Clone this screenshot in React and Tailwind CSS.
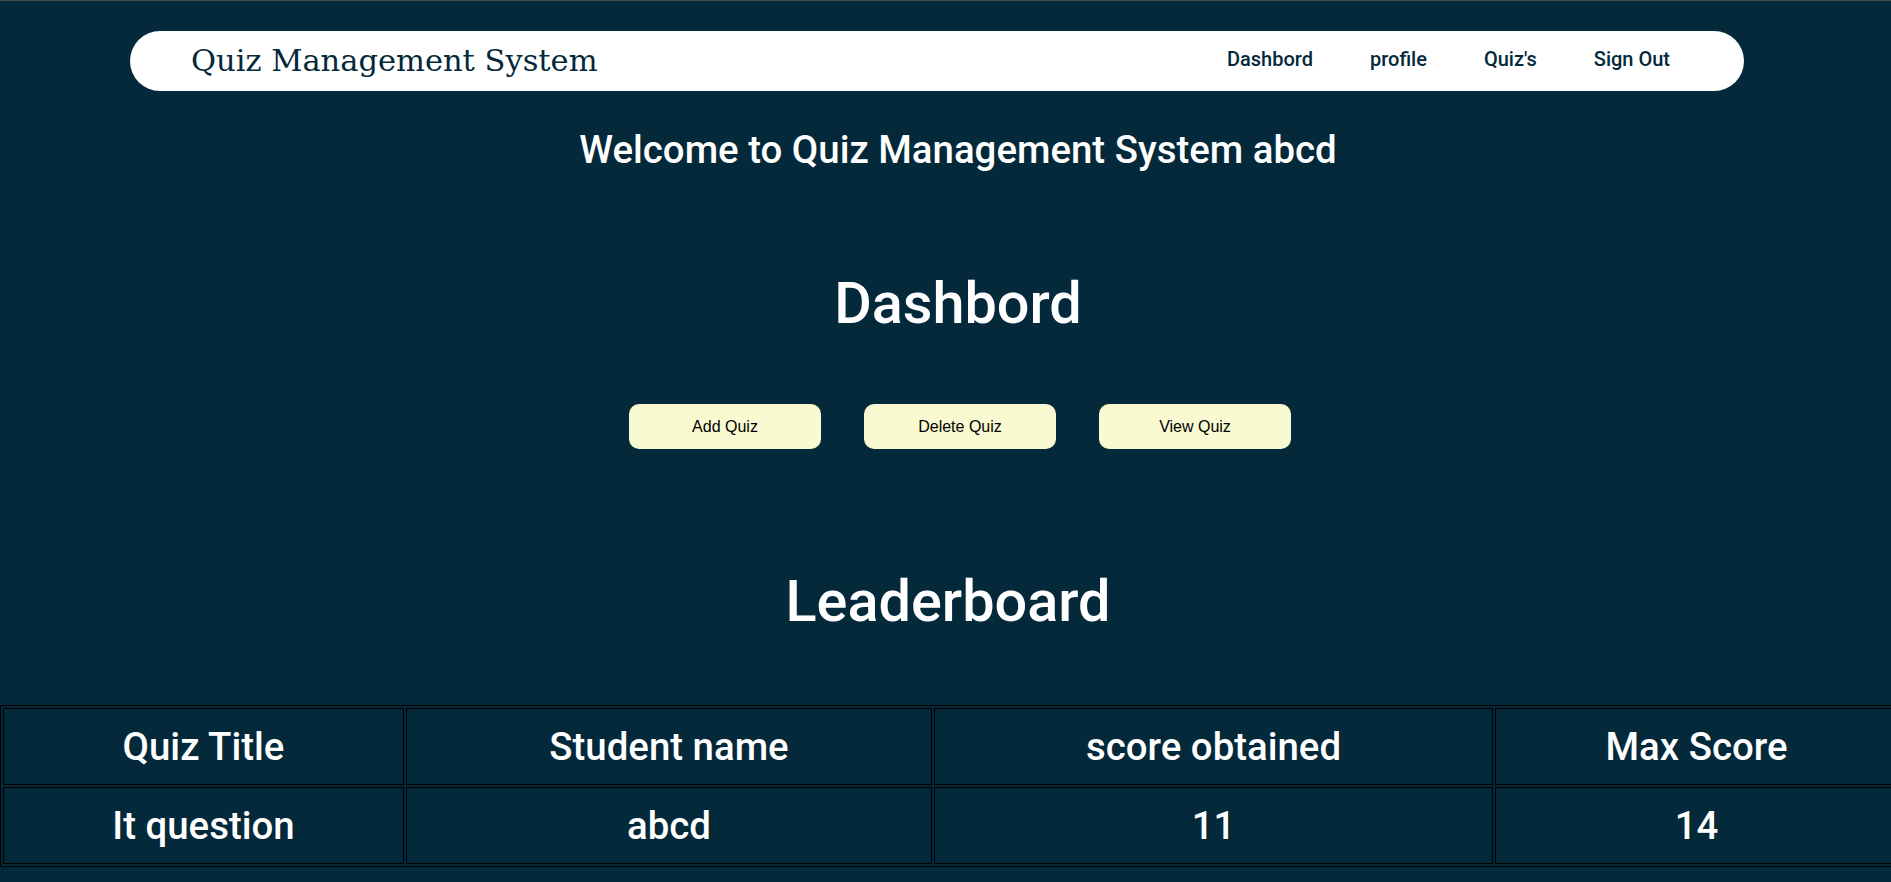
const navLinks = ['Dashbord', 'profile', "Quiz's", 'Sign Out'];

const actions = ['Add Quiz', 'Delete Quiz', 'View Quiz'];

const leaderboard = [
  { title: 'It question', student: 'abcd', score: 11, max: 14 },
];

const Navbar = () => (
  <nav className="mt-[30px] ml-[130px] w-[1614px] h-[60px] rounded-[30px] bg-white flex items-center justify-between pl-[61px] pr-[74px]">
    <h2 className="font-['DejaVu_Serif',serif] text-[30.5px] leading-[36px] text-[#03293a]">
      Quiz Management System
    </h2>
    <ul className="flex gap-[57px] -mt-[5px]">
      {navLinks.map((link) => (
        <li key={link}>
          <a href="#" className="text-[20px] font-medium text-[#03293a]">
            {link}
          </a>
        </li>
      ))}
    </ul>
  </nav>
);

const App = () => {
  return (
    <div className="w-[1916px] min-h-screen bg-[#03293a] border-t border-[#4b4b4b] font-['Roboto',sans-serif] text-white overflow-hidden">
      <Navbar />

      <h1 className="mt-[36px] text-center text-[38.4px] leading-[45px] font-medium">
        Welcome to Quiz Management System abcd
      </h1>

      {/* Dashboard actions */}
      <h1 className="mt-[98px] text-center text-[57.6px] leading-[68px] font-medium">Dashbord</h1>
      <div className="mt-[66px] flex justify-center gap-[43px] pl-[4px]">
        {actions.map((label) => (
          <button
            key={label}
            className="w-[192px] h-[45px] rounded-[10px] bg-[#fafad2] text-black font-['Liberation_Sans',Arial,sans-serif] text-[16px]"
          >
            {label}
          </button>
        ))}
      </div>

      {/* Leaderboard */}
      <h1 className="mt-[119px] pr-[20px] text-center text-[57.6px] leading-[68px] font-medium">Leaderboard</h1>
      <table className="mt-[69px] w-[1901px] table-fixed border-separate border-spacing-[2px] border border-black">
        <thead>
          <tr>
            <th className="w-[401px] h-[77px] border border-black text-[38.4px] font-medium">Quiz Title</th>
            <th className="w-[526px] h-[77px] border border-black text-[38.4px] font-medium">Student name</th>
            <th className="w-[559px] h-[77px] border border-black text-[38.4px] font-medium">score obtained</th>
            <th className="w-[403px] h-[77px] border border-black text-[38.4px] font-medium">Max Score</th>
          </tr>
        </thead>
        <tbody>
          {leaderboard.map((row) => (
            <tr key={row.title}>
              <td className="h-[77px] border border-black text-center text-[38.4px] font-medium">{row.title}</td>
              <td className="h-[77px] border border-black text-center text-[38.4px] font-medium">{row.student}</td>
              <td className="h-[77px] border border-black text-center text-[38.4px] font-medium">{row.score}</td>
              <td className="h-[77px] border border-black text-center text-[38.4px] font-medium">{row.max}</td>
            </tr>
          ))}
        </tbody>
      </table>
    </div>
  );
};

export default App;
